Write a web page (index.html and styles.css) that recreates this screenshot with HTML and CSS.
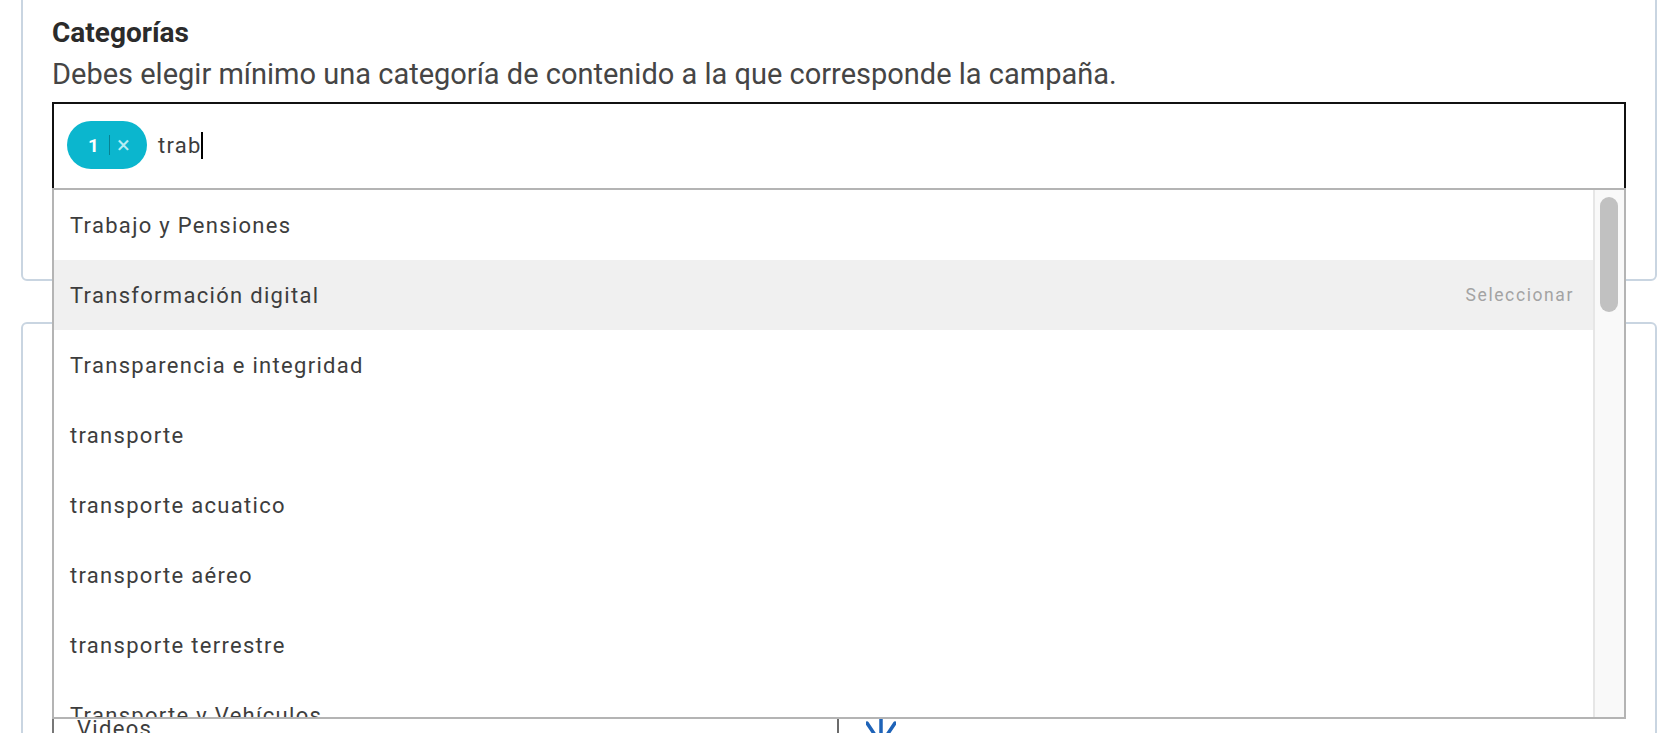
FILE: index.html
```html
<!DOCTYPE html>
<html lang="es">
<head>
  <meta charset="UTF-8">
  <title>Categorías</title>
  <link rel="stylesheet" href="styles.css">
</head>
<body>
  <div class="page">
    <section class="card card-top">
      <h3 class="card-title">Categorías</h3>
      <p class="card-help">Debes elegir mínimo una categoría de contenido a la que corresponde la campaña.</p>

      <div class="tags-input">
        <span class="chip">
          <span class="chip-count">1</span>
          <span class="chip-sep"></span>
          <span class="chip-x">×</span>
        </span>
        <span class="typed">trab</span><span class="caret"></span>

        <div class="dropdown">
          <ul class="options">
            <li>Trabajo y Pensiones</li>
            <li class="active">Transformación digital <span class="hint">Seleccionar</span></li>
            <li>Transparencia e integridad</li>
            <li>transporte</li>
            <li>transporte acuatico</li>
            <li>transporte aéreo</li>
            <li>transporte terrestre</li>
            <li>Transporte y Vehículos</li>
          </ul>
          <div class="scrollbar"><div class="thumb"></div></div>
        </div>
      </div>
    </section>

    <section class="card card-bottom">
      <div class="field-row">
        <div class="select">Videos</div>
        <div class="icon-btn">
          <svg width="30" height="44" viewBox="0 0 30 44" fill="none" stroke="#1e63b8" stroke-width="3.5" stroke-linecap="round" stroke-linejoin="round">
            <path d="M15 2 V40"/>
            <path d="M1 19 L15 40 L29 19"/>
          </svg>
        </div>
      </div>
    </section>
  </div>
</body>
</html>
```

FILE: styles.css
```css
body {
  margin: 0;
  background: #fff;
  font-family: Roboto, "Noto Sans", sans-serif;
  color: #3d3d3d;
  overflow: hidden;
  height: 733px;
}
.page {
  padding: 0 11px 0 21px;
}
.card {
  border: 2px solid #c9d5e1;
  border-radius: 6px;
  padding: 0 29px;
}
.card-top {
  margin-top: -24px;
  padding-top: 38px;
  padding-bottom: 87px;
}
.card-title {
  margin: 0;
  font-size: 28px;
  line-height: 34px;
  font-weight: 700;
  color: #2b2b2b;
}
.card-help {
  margin: 6px 0 10px;
  font-size: 29px;
  line-height: 36px;
  color: #454545;
}
.tags-input {
  position: relative;
  height: 82px;
  border: 2px solid #111;
  display: flex;
  align-items: center;
  padding: 0 13px 4px;
}
.chip {
  display: flex;
  align-items: center;
  height: 48px;
  width: 80px;
  box-sizing: border-box;
  padding-left: 21px;
  border-radius: 24px;
  background: #0bb6ce;
}
.chip-count {
  color: #fff;
  font-weight: 700;
  font-size: 19px;
}
.chip-sep {
  width: 1px;
  height: 20px;
  margin: 0 7px 0 10px;
  background: rgba(0,0,0,0.28);
}
.chip-x {
  color: #b8edf4;
  font-size: 24px;
}
.typed {
  margin-left: 11px;
  font-size: 22px;
  letter-spacing: 1.3px;
  color: #3d3d3d;
}
.caret {
  width: 2px;
  height: 27px;
  margin-left: -1px;
  background: #000;
}
.dropdown {
  position: absolute;
  left: -2px;
  right: -2px;
  top: calc(100% - 2px);
  height: 527px;
  display: flex;
  border: 2px solid #b4b4b4;
  background: #fff;
  z-index: 5;
}
.options {
  flex: 1;
  list-style: none;
  margin: 0;
  padding: 0;
  overflow: hidden;
}
.options li {
  height: 70px;
  display: flex;
  align-items: center;
  justify-content: space-between;
  padding: 0 19px 0 16px;
  font-size: 22px;
  letter-spacing: 1.3px;
  color: #3d3d3d;
}
.options li.active {
  background: #f0f0f0;
}
.hint {
  font-size: 17.5px;
  letter-spacing: 1.6px;
  color: #a3a3a3;
}
.scrollbar {
  width: 18px;
  padding: 7px 6px 0 5px;
  background: #f9f9f9;
  border-left: 2px solid #e6e6e6;
}
.thumb {
  width: 18px;
  height: 115px;
  border-radius: 9px;
  background: #c1c1c1;
}
.card-bottom {
  margin-top: 41px;
  padding-top: 372px;
  height: 200px;
}
.field-row {
  display: flex;
  align-items: flex-start;
}
.select {
  width: 737px;
  height: 60px;
  border: 2px solid #777;
  border-right-color: #6b6b6b;
  padding: 0 23px;
  display: flex;
  align-items: center;
  font-size: 22px;
  letter-spacing: 1.3px;
  color: #3d3d3d;
}
.icon-btn {
  padding: 8px 0 0 27px;
}
```
